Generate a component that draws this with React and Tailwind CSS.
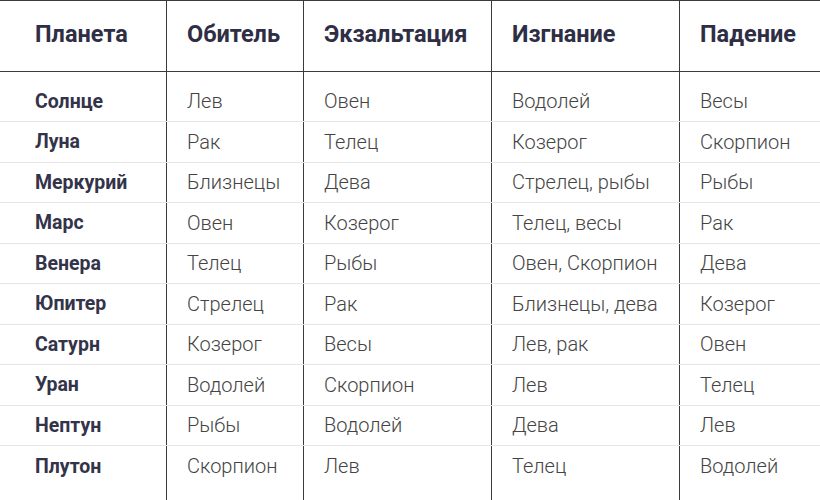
const rows = [
  ['Солнце', 'Лев', 'Овен', 'Водолей', 'Весы'],
  ['Луна', 'Рак', 'Телец', 'Козерог', 'Скорпион'],
  ['Меркурий', 'Близнецы', 'Дева', 'Стрелец, рыбы', 'Рыбы'],
  ['Марс', 'Овен', 'Козерог', 'Телец, весы', 'Рак'],
  ['Венера', 'Телец', 'Рыбы', 'Овен, Скорпион', 'Дева'],
  ['Юпитер', 'Стрелец', 'Рак', 'Близнецы, дева', 'Козерог'],
  ['Сатурн', 'Козерог', 'Весы', 'Лев, рак', 'Овен'],
  ['Уран', 'Водолей', 'Скорпион', 'Лев', 'Телец'],
  ['Нептун', 'Рыбы', 'Водолей', 'Дева', 'Лев'],
  ['Плутон', 'Скорпион', 'Лев', 'Телец', 'Водолей'],
];

const headers = ['Планета', 'Обитель', 'Экзальтация', 'Изгнание', 'Падение'];

const cols = 'grid grid-cols-[167px_137px_188px_188px_1fr]';

function Cell({ i, className = '', children }) {
  return (
    <div
      className={`flex items-center ${i === 0 ? 'pl-[35px]' : 'pl-5'} ${
        i < 4 ? 'border-r border-[#3a3a3a]' : ''
      } ${className}`}
    >
      {children}
    </div>
  );
}

export default function App() {
  return (
    <div className="w-[820px] h-[500px] overflow-hidden bg-white font-['Roboto',sans-serif]">
      {/* Header */}
      <div className={`${cols} h-[72px] border-y border-[#3a3a3a]`}>
        {headers.map((h, i) => (
          <Cell key={h} i={i} className="pb-[3px] text-[23.5px] font-bold text-[#2e2e45]">
            {h}
          </Cell>
        ))}
      </div>

      {/* Body */}
      {rows.map((r, ri) => (
        <div
          key={r[0]}
          className={`${cols} ${ri === 0 ? 'h-[50px]' : 'h-[40.5px]'} ${
            ri < rows.length - 1 ? 'border-b border-[#e6e6e6]' : ''
          }`}
        >
          {r.map((c, i) => (
            <Cell
              key={i}
              i={i}
              className={`${ri === 0 ? 'pt-[9.5px]' : ''} ${
                i === 0
                  ? 'text-[19.5px] font-bold text-[#33334a]'
                  : 'text-[20px] font-light text-[#444444]'
              }`}
            >
              {c}
            </Cell>
          ))}
        </div>
      ))}

      {/* filler so the column lines run to the bottom */}
      <div className={`${cols} h-[20px]`}>
        {headers.map((h, i) => (
          <Cell key={h} i={i} />
        ))}
      </div>
    </div>
  );
}
